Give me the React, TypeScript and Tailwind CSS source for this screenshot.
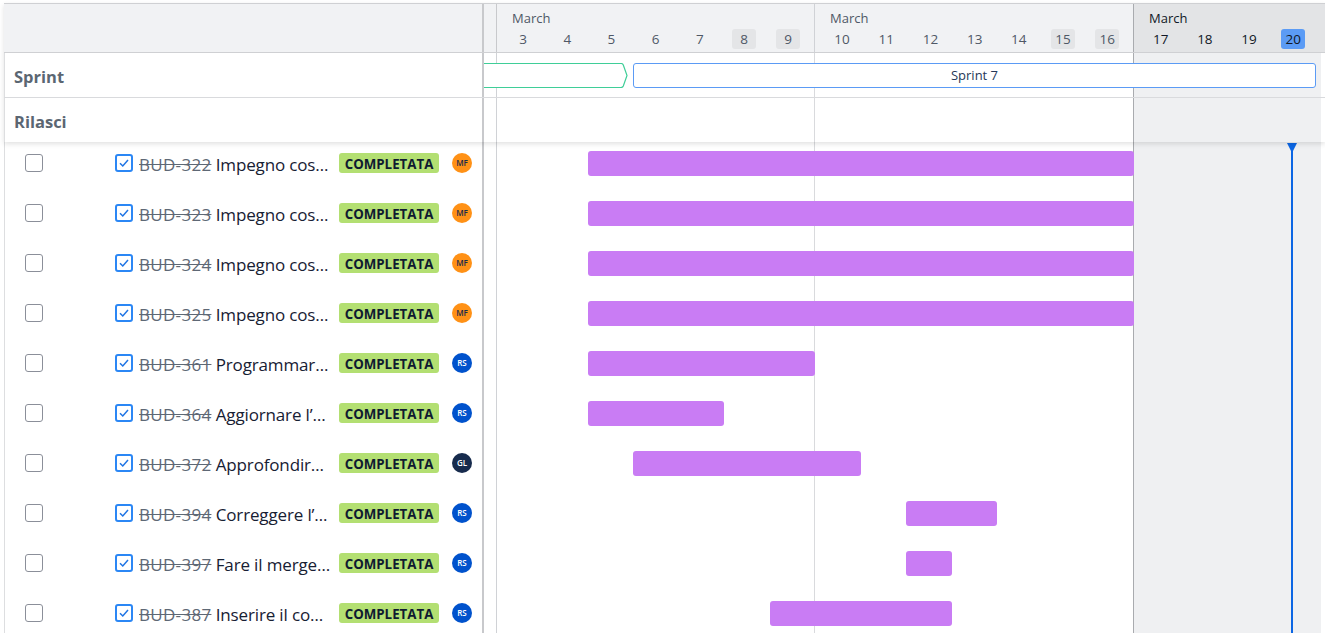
import React from "react";

const weeks = [
  { cls: "w-[318px] border-r border-r-[#d0d2d6] bg-[#f1f2f4] text-[#4f5866]", pad: "pl-[4px]", days: [3, 4, 5, 6, 7, 8, 9], now: false },
  { cls: "w-[319px] border-r border-r-[#a9abaf] bg-[#f1f2f4] text-[#4f5866]", pad: "pl-[5px]", days: [10, 11, 12, 13, 14, 15, 16], now: false },
  { cls: "flex-1 bg-[#e3e4e6] text-[#111827]", pad: "pl-[4.6px]", days: [17, 18, 19, 20], now: true },
];
const weekend = [8, 9, 15, 16];

type Row = { id: string; title: string; who: "MF" | "RS" | "GL"; ml: string; w: string };
const rows: Row[] = [
  { id: "BUD-322", title: "Impegno cos…", who: "MF", ml: "ml-[104px]", w: "w-[546px]" },
  { id: "BUD-323", title: "Impegno cos…", who: "MF", ml: "ml-[104px]", w: "w-[546px]" },
  { id: "BUD-324", title: "Impegno cos…", who: "MF", ml: "ml-[104px]", w: "w-[546px]" },
  { id: "BUD-325", title: "Impegno cos…", who: "MF", ml: "ml-[104px]", w: "w-[546px]" },
  { id: "BUD-361", title: "Programmar…", who: "RS", ml: "ml-[104px]", w: "w-[227px]" },
  { id: "BUD-364", title: "Aggiornare l’…", who: "RS", ml: "ml-[104px]", w: "w-[136px]" },
  { id: "BUD-372", title: "Approfondir…", who: "GL", ml: "ml-[149px]", w: "w-[228px]" },
  { id: "BUD-394", title: "Correggere l’…", who: "RS", ml: "ml-[422px]", w: "w-[91px]" },
  { id: "BUD-397", title: "Fare il merge…", who: "RS", ml: "ml-[422px]", w: "w-[46px]" },
  { id: "BUD-387", title: "Inserire il co…", who: "RS", ml: "ml-[286px]", w: "w-[182px]" },
];

const avatarCls: Record<Row["who"], string> = {
  MF: "bg-[#ff9116] text-[#172b4d]",
  RS: "bg-[#0052cc] text-white",
  GL: "bg-[#172b4d] text-white",
};

function Columns() {
  return (
    <div className="absolute inset-0 flex">
      <div className="w-[13px] border-r border-r-[#d0d2d6]" />
      <div className="w-[318px] border-r border-r-[#d9dadd]" />
      <div className="w-[319px] border-r border-r-[#a9abaf]" />
      <div className="flex-1 bg-[#eff0f2]" />
    </div>
  );
}

function Check() {
  return (
    <span className="flex h-[18px] w-[18px] shrink-0 items-center justify-center rounded-[3px] border-2 border-[#2b87f5] bg-white">
      <svg viewBox="0 0 12 12" className="h-[12px] w-[12px]" fill="none" stroke="#1f74e4" strokeWidth="1.5">
        <path d="M2 6.2 L4.8 9 L10 3" />
      </svg>
    </span>
  );
}

export default function App() {
  return (
    <div className="h-[633px] w-[1325px] overflow-hidden bg-white pl-[4px] pt-[3px] font-['Open_Sans','Noto_Sans',sans-serif]">
      <div className="relative z-10 shadow-[0_2px_5px_rgba(0,0,0,0.12)]">
        <div className="flex h-[50px] border-y border-[#cfd0d3] bg-[#f1f2f4]">
          <div className="w-[480px] border-r-2 border-r-[#c8c9cc]" />
          <div className="w-[13px] border-r border-r-[#c8c9cc]" />
          {weeks.map((w) => (
            <div key={w.days[0]} className={`${w.cls} h-[48px]`}>
              <div className="mt-[5px] h-[18px] pl-[15px] text-[13px] leading-[18px]">March</div>
              <div className={`mt-[2px] flex ${w.pad}`}>
                {w.days.map((d) => (
                  <div key={d} className="flex h-[20px] w-[44.2px] justify-center">
                    <span
                      className={`w-[24px] rounded-[3px] text-center text-[13.5px] leading-[21px] ${
                        d === 20 ? "bg-[#5b9bf5] text-[#111827]" : weekend.includes(d) ? "bg-[#e4e5e7]" : ""
                      }`}
                    >
                      {d}
                    </span>
                  </div>
                ))}
              </div>
            </div>
          ))}
        </div>

        <div className="flex h-[45px] border-b border-[#d9dadd] bg-white">
          <div className="flex w-[480px] items-center border-l border-r-2 border-l-[#dddee0] border-r-[#c8c9cc] pl-[9px] pt-[5px] text-[16.5px] font-bold text-[#5b6672]">
            Sprint
          </div>
          <div className="relative w-[837px] flex-none">
            <Columns />
            <svg className="absolute left-0 top-[10px] h-[25px] w-[144px]" viewBox="0 0 144 25" fill="white" stroke="#3fce98" strokeWidth="1.2">
              <path d="M0 .5 H137 Q138.6 .5 139.3 2 L143 12.5 L139.3 23 Q138.6 24.5 137 24.5 H0" />
            </svg>
            <div className="absolute left-[149px] top-[10px] flex h-[25px] w-[683px] items-center justify-center rounded-[3px] border border-[#5b9bf5] bg-white text-[13px] text-[#253858]">
              Sprint 7
            </div>
          </div>
        </div>

        <div className="flex h-[44px] bg-white">
          <div className="flex w-[480px] items-center border-l border-r-2 border-l-[#dddee0] border-r-[#c8c9cc] pl-[9px] pt-[5px] text-[16.5px] font-bold text-[#5b6672]">
            Rilasci
          </div>
          <div className="relative w-[837px] flex-none">
            <Columns />
          </div>
        </div>
      </div>

      <div className="flex h-[491px]">
        <div className="w-[480px] shrink-0 border-l border-r-2 border-l-[#dddee0] border-r-[#c8c9cc] pt-[9px]">
          {rows.map((r) => (
            <div key={r.id} className="mb-[25px] flex h-[25px] items-start pt-[2px]">
              <span className="ml-[20px] mt-[1px] h-[18px] w-[18px] shrink-0 rounded-[3px] border border-[#8b8f99] bg-white" />
              <span className="ml-[72px] mt-[1px]">
                <Check />
              </span>
              <span className="ml-[6px] -mt-[1px] w-[200px] shrink-0 whitespace-nowrap text-[17px] leading-[25px] tracking-[-0.15px] text-[#172033]">
                <span className="tracking-[0.3px] text-[#5e6875] line-through">{r.id}</span> {r.title}
              </span>
              <span className="flex h-[20px] w-[100px] shrink-0 items-center justify-center rounded-[3px] bg-[#b3df72] pt-[3px] text-[13.3px] font-bold leading-[17px] text-[#0f1a30]">
                COMPLETATA
              </span>
              <span
                className={`ml-[13px] flex h-[20px] w-[20px] shrink-0 items-center justify-center rounded-full text-[8px] font-semibold ${avatarCls[r.who]}`}
              >
                {r.who}
              </span>
            </div>
          ))}
        </div>

        <div className="relative w-[837px] flex-none pt-[9px]">
          <Columns />
          {rows.map((r) => (
            <div key={r.id} className={`relative mb-[25px] h-[25px] rounded-[3px] bg-[#c97cf4] ${r.ml} ${r.w}`} />
          ))}
          <svg className="absolute left-[803px] top-0 h-[491px] w-[10px]" viewBox="0 0 10 491">
            <path d="M0 1 H10 L5 11 Z" fill="#0c66e4" />
            <rect x="4" y="5" width="2" height="486" fill="#0c66e4" />
          </svg>
        </div>
      </div>
    </div>
  );
}
